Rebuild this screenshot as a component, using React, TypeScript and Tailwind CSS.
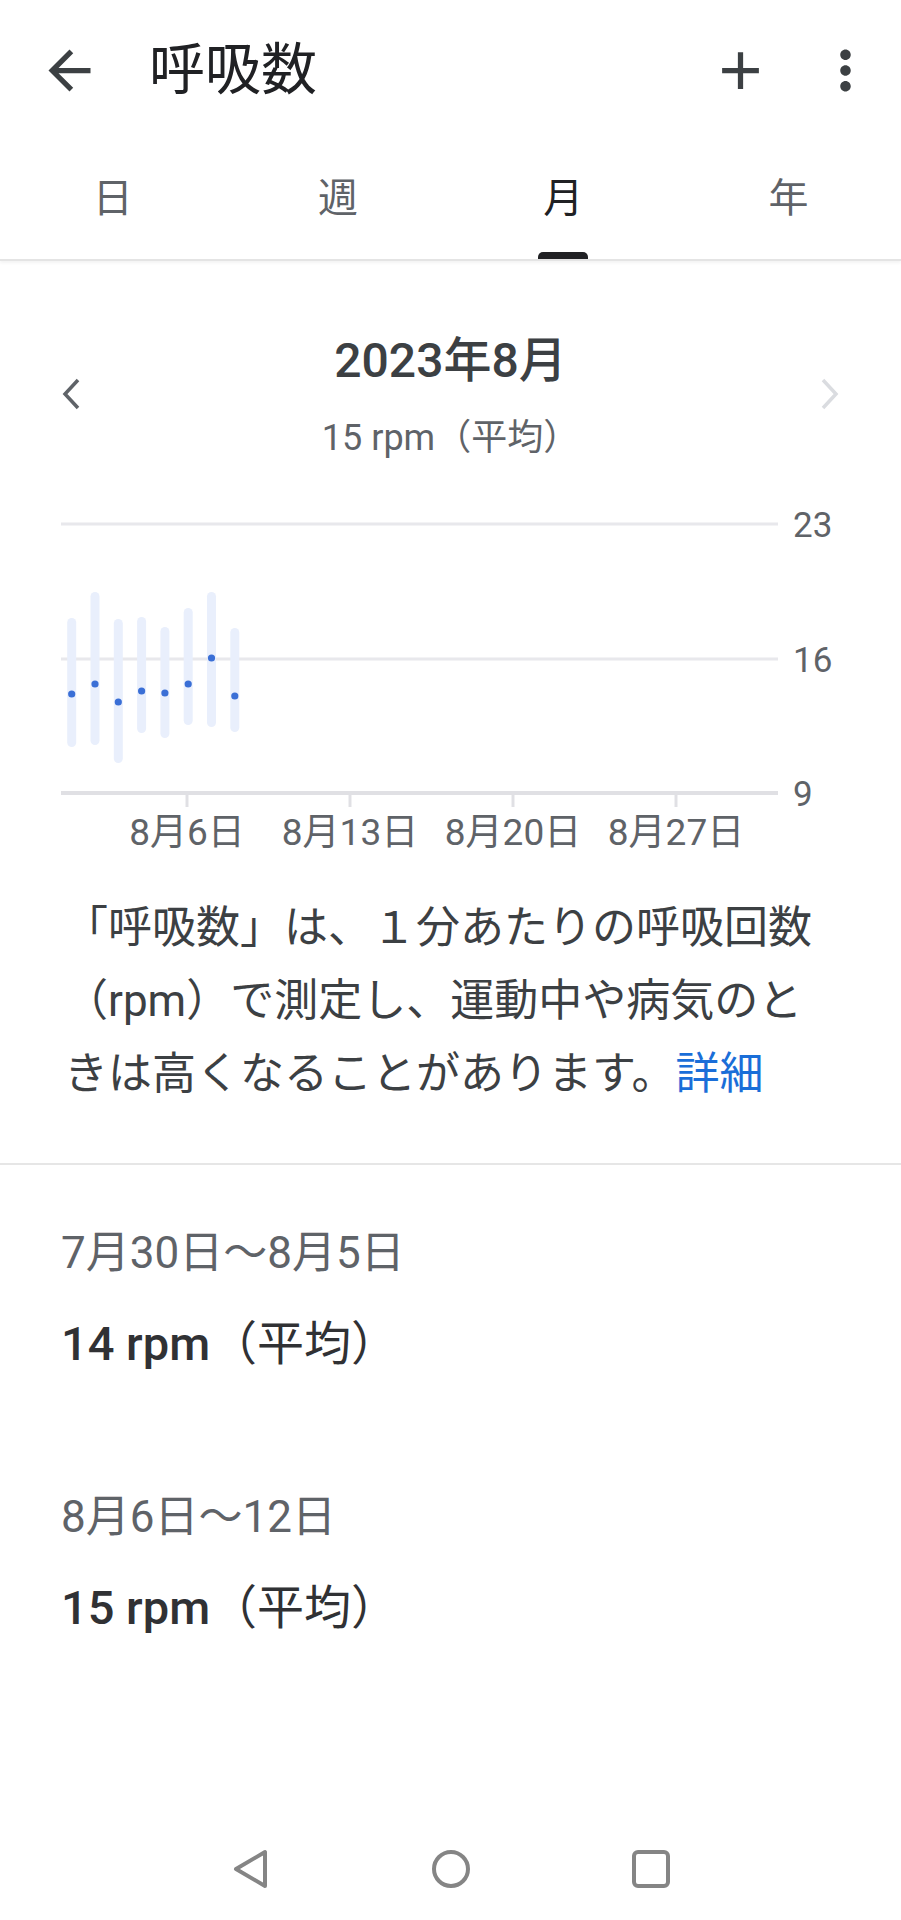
import React from "react";

const FONT = { fontFamily: 'Roboto, "Noto Sans CJK JP", "Noto Sans", sans-serif' };

const TABS = ["日", "週", "月", "年"];

// page y of chart top is 490; values below are in chart coordinates
const TOP = 490;
const BARS = [
  { lo: 618, hi: 747, dot: 694 },
  { lo: 592, hi: 745, dot: 684 },
  { lo: 619, hi: 763, dot: 702 },
  { lo: 617, hi: 733, dot: 691 },
  { lo: 627, hi: 738, dot: 693 },
  { lo: 608, hi: 725, dot: 684 },
  { lo: 592, hi: 727, dot: 658 },
  { lo: 628, hi: 732, dot: 696 },
];
const GRID = [
  { y: 524, label: "23" },
  { y: 659, label: "16" },
];
const TICKS = [
  { x: 187, label: "8月6日" },
  { x: 350, label: "8月13日" },
  { x: 513, label: "8月20日" },
  { x: 676, label: "8月27日" },
];

const WEEKS = [
  { range: "7月30日～8月5日", value: "14 rpm" },
  { range: "8月6日～12日", value: "15 rpm" },
];

function Chart() {
  return (
    <svg width="901" height="370" viewBox="0 0 901 370" className="block">
      {GRID.map((g) => (
        <g key={g.label}>
          <line x1="61" x2="778" y1={g.y - TOP} y2={g.y - TOP} stroke="#e8e8ec" strokeWidth="3" />
          <text x="793" y={g.y - TOP + 4} dominantBaseline="middle" fontSize="35" fill="#5f6368" style={FONT}>
            {g.label}
          </text>
        </g>
      ))}
      {BARS.map((b, i) => {
        const x = 71.7 + i * 23.3;
        return (
          <g key={i}>
            <rect x={x - 4.5} y={b.lo - TOP} width="9" height={b.hi - b.lo} rx="4.5" fill="#e9effc" />
            <circle cx={x} cy={b.dot - TOP} r="3.6" fill="#3a6fd6" />
          </g>
        );
      })}
      <line x1="61" x2="778" y1={793 - TOP} y2={793 - TOP} stroke="#e0e0e4" strokeWidth="4" />
      <text x="793" y={793 - TOP + 4} dominantBaseline="middle" fontSize="35" fill="#5f6368" style={FONT}>
        9
      </text>
      {TICKS.map((t) => (
        <g key={t.label}>
          <line x1={t.x} x2={t.x} y1={793 - TOP} y2={807 - TOP} stroke="#e0e0e4" strokeWidth="3" />
          <text x={t.x} y={835 - TOP} textAnchor="middle" dominantBaseline="middle" fontSize="37" fill="#5f6368" style={FONT}>
            {t.label}
          </text>
        </g>
      ))}
    </svg>
  );
}

export default function App() {
  return (
    <div className="flex min-h-[1920px] w-[901px] flex-col bg-white" style={FONT}>
      {/* app bar */}
      <div className="flex h-[140px] items-center pl-[38px] pr-[24px]">
        <svg width="63" height="63" viewBox="0 0 24 24" fill="#3c4043">
          <path d="M20 11H7.83l5.59-5.59L12 4l-8 8 8 8 1.41-1.41L7.83 13H20v-2z" />
        </svg>
        <h1 className="ml-[48px] text-[56px] leading-none font-normal text-[#202124]">呼吸数</h1>
        <div className="flex-1" />
        <svg width="63" height="63" viewBox="0 0 24 24" fill="#3c4043">
          <path d="M19 13h-6v6h-2v-6H5v-2h6V5h2v6h6v2z" />
        </svg>
        <svg width="63" height="63" viewBox="0 0 24 24" fill="#3c4043" className="ml-[42px]">
          <path d="M12 8c1.1 0 2-.9 2-2s-.9-2-2-2-2 .9-2 2 .9 2 2 2zm0 2c-1.1 0-2 .9-2 2s.9 2 2 2 2-.9 2-2-.9-2-2-2zm0 6c-1.1 0-2 .9-2 2s.9 2 2 2 2-.9 2-2-.9-2-2-2z" />
        </svg>
      </div>

      {/* tabs */}
      <div className="grid h-[121px] grid-cols-4 border-b-2 border-[#e4e4e4] shadow-[0_2px_3px_rgba(0,0,0,0.05)]">
        {TABS.map((t) => {
          const active = t === "月";
          return (
            <div key={t} className="flex flex-col items-center">
              <span
                className={
                  "mt-[35px] text-[40px] leading-[48px] " + (active ? "text-[#202124]" : "text-[#5f6368]")
                }
              >
                {t}
              </span>
              <div
                className={
                  "mt-auto h-[7px] w-[50px] rounded-t-[5px] " + (active ? "bg-[#202124]" : "bg-transparent")
                }
              />
            </div>
          );
        })}
      </div>

      {/* period selector */}
      <div className="flex h-[229px] items-start justify-between px-[60px]">
        <svg width="22" height="34" viewBox="0 0 22 34" className="mt-[116px]">
          <path d="M18 3 L5 17 L18 31" fill="none" stroke="#5f6368" strokeWidth="3.5" />
        </svg>
        <div className="flex flex-col items-center pt-[72px]">
          <div className="text-[48px] leading-[56px] font-medium text-[#3c4043]">2023年8月</div>
          <div className="mt-[25px] text-[36px] leading-[48px] text-[#5f6368]">15 rpm（平均）</div>
        </div>
        <svg width="22" height="34" viewBox="0 0 22 34" className="mt-[116px]">
          <path d="M4 3 L17 17 L4 31" fill="none" stroke="#dadce0" strokeWidth="3.5" />
        </svg>
      </div>

      <Chart />

      {/* description */}
      <p className="mt-[32px] px-[64px] text-[44px] leading-[73px] whitespace-nowrap text-[#3c4043]">
        「呼吸数」は、１分あたりの呼吸回数
        <br />
        （rpm）で測定し、運動中や病気のと
        <br />
        きは高くなることがあります。<span className="text-[#1a6ed8]">詳細</span>
      </p>

      <div className="mt-[52px] h-[2px] bg-[#e6e6e6]" />

      {/* weekly list */}
      <div className="flex flex-col px-[61px]">
        {WEEKS.map((w, i) => (
          <div key={w.range} className={i === 0 ? "mt-[60px]" : "mt-[115px]"}>
            <div className="text-[44px] leading-[56px] text-[#5f6368]">{w.range}</div>
            <div className="mt-[33px] text-[47px] leading-[60px] text-[#303134]">
              <span className="font-medium">{w.value}</span>
              <span className="font-normal">（平均）</span>
            </div>
          </div>
        ))}
      </div>

      <div className="flex-1" />

      {/* system nav bar */}
      <div className="flex h-[102px] items-center justify-center">
        <div className="flex w-[200px] justify-center">
          <svg width="40" height="40" viewBox="0 0 40 40">
            <path d="M34 3 L34 37 L5 20 Z" fill="none" stroke="#858585" strokeWidth="4" strokeLinejoin="round" />
          </svg>
        </div>
        <div className="flex w-[200px] justify-center">
          <svg width="42" height="42" viewBox="0 0 42 42">
            <circle cx="21" cy="21" r="17" fill="none" stroke="#858585" strokeWidth="4" />
          </svg>
        </div>
        <div className="flex w-[200px] justify-center">
          <svg width="40" height="40" viewBox="0 0 40 40">
            <rect x="3" y="3" width="34" height="34" rx="4" fill="none" stroke="#858585" strokeWidth="4" />
          </svg>
        </div>
      </div>
    </div>
  );
}
